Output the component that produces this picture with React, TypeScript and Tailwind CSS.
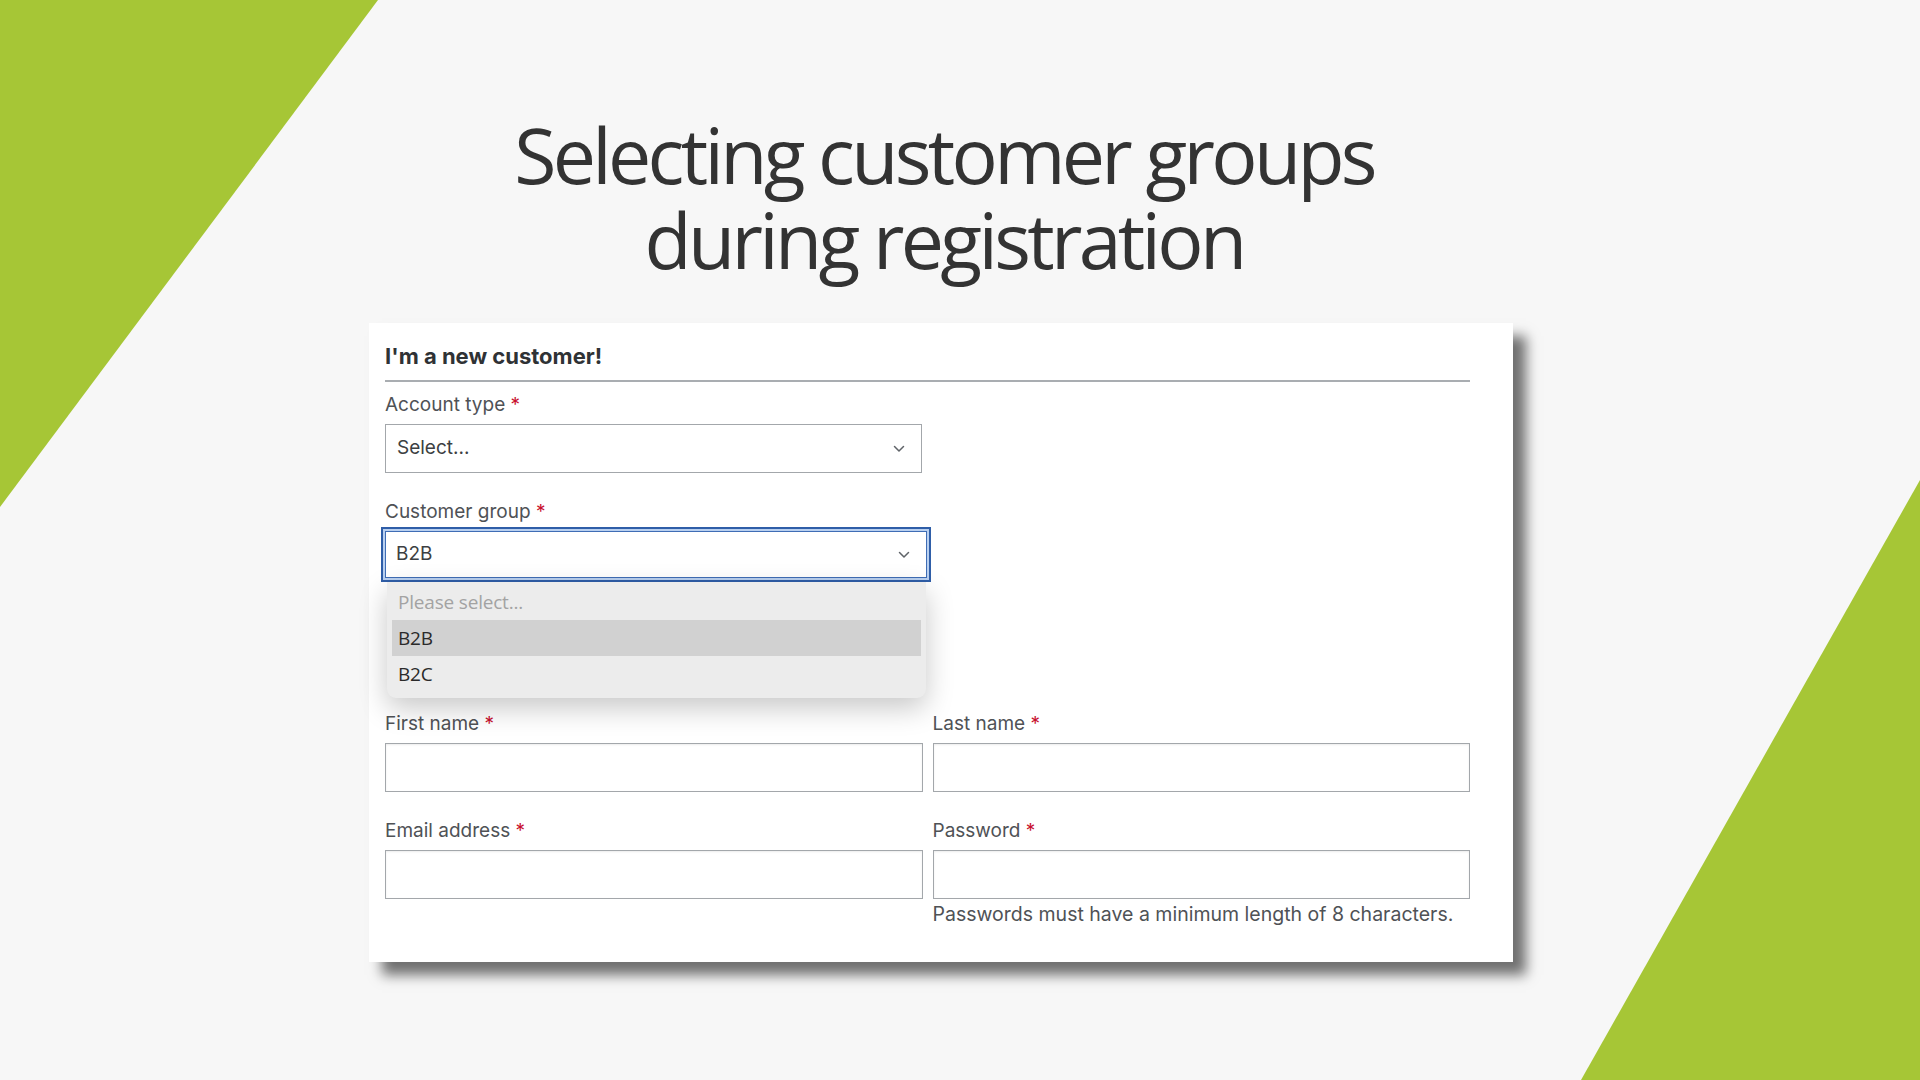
import React from "react";

const Chevron = () => (
  <svg width="12" height="8" viewBox="0 0 12 8" fill="none">
    <path d="M1.5 1.5L6 6L10.5 1.5" stroke="#5f6368" strokeWidth="1.5" strokeLinecap="round" strokeLinejoin="round" />
  </svg>
);

const Label = ({ text }: { text: string }) => (
  <div className="h-[24px] leading-[24px] text-[19px] text-[#4f5256]">
    {text} <span className="text-[#c8102e]">*</span>
  </div>
);

const TextInput = () => (
  <div className="mt-[7px] h-[49px] border-[1.5px] border-[#a3a7ab] bg-white shadow-[inset_0_1px_2px_rgba(0,0,0,0.08)]" />
);

export default function App() {
  return (
    <div
      className="relative w-[1920px] h-[1080px] overflow-hidden bg-[#f7f7f7]"
      style={{ fontFamily: "Inter, 'Liberation Sans', sans-serif" }}
    >
      <svg className="absolute inset-0" width="1920" height="1080" viewBox="0 0 1920 1080">
        <polygon points="0,0 378,0 0,507" fill="#a6c636" />
        <polygon points="1920,480 1920,1080 1581,1080" fill="#a6c636" />
      </svg>

      <div className="relative flex flex-col items-center pr-[38px] pt-[112px]">
        <h1
          className="pl-[6px] text-center text-[77px] leading-[85px] font-normal tracking-[-0.048em] text-[#333333]"
          style={{ fontFamily: "'Open Sans', sans-serif" }}
        >
          Selecting customer groups
          <br />
          during registration
        </h1>

        <div className="mt-[41px] w-[1144px] h-[639px] bg-white pl-[16px] pr-[43px] pt-[19px] shadow-[13px_13px_12px_rgba(0,0,0,0.55)]">
          <div className="h-[28px] leading-[28px] text-[22px] font-bold text-[#2f3235]">I'm a new customer!</div>
          <div className="mt-[10px] h-[2px] bg-[#a9adb1]" />

          <div className="mt-[11px] w-[537px]">
            <Label text="Account type" />
            <div className="mt-[7px] h-[49px] border-[1.5px] border-[#a3a7ab] bg-white flex items-center justify-between pl-[11px] pr-[16px]">
              <span className="text-[19px] text-[#3c3f42]">Select...</span>
              <Chevron />
            </div>
          </div>

          <div className="mt-[27px] w-[537px]">
            <Label text="Customer group" />
            <div className="relative mt-[7px] w-[542px] h-[47px] border border-[#3f6db5] bg-white flex items-center justify-between pl-[10px] pr-[16px] shadow-[0_0_0_2px_#b9d0f0,0_0_0_4px_#2f5ea8]">
              <span className="text-[19px] text-[#3c3f42]">B2B</span>
              <Chevron />
              <div
                className="absolute left-[1px] top-[50px] w-[539px] h-[116px] rounded-b-[9px] bg-[#ececec] px-[5px] pt-[2px] shadow-[0_10px_28px_rgba(0,0,0,0.22)] text-[19px] tracking-[-0.01em]"
                style={{ fontFamily: "'Open Sans', sans-serif" }}
              >
                <div className="h-[36px] leading-[36px] px-[6px] text-[#a3a3a3]">Please select...</div>
                <div className="h-[36px] leading-[36px] px-[6px] bg-[#d1d1d1] text-[#2a2a2a]">B2B</div>
                <div className="h-[36px] leading-[36px] px-[6px] text-[#2a2a2a]">B2C</div>
              </div>
            </div>
          </div>

          <div className="mt-[134px] grid grid-cols-2 gap-x-[10px]">
            <div>
              <Label text="First name" />
              <TextInput />
            </div>
            <div>
              <Label text="Last name" />
              <TextInput />
            </div>
            <div className="mt-[27px]">
              <Label text="Email address" />
              <TextInput />
            </div>
            <div className="mt-[27px]">
              <Label text="Password" />
              <TextInput />
              <div className="mt-[3px] h-[24px] leading-[24px] text-[19.5px] text-[#4f5256]">
                Passwords must have a minimum length of 8 characters.
              </div>
            </div>
          </div>
        </div>
      </div>
    </div>
  );
}
